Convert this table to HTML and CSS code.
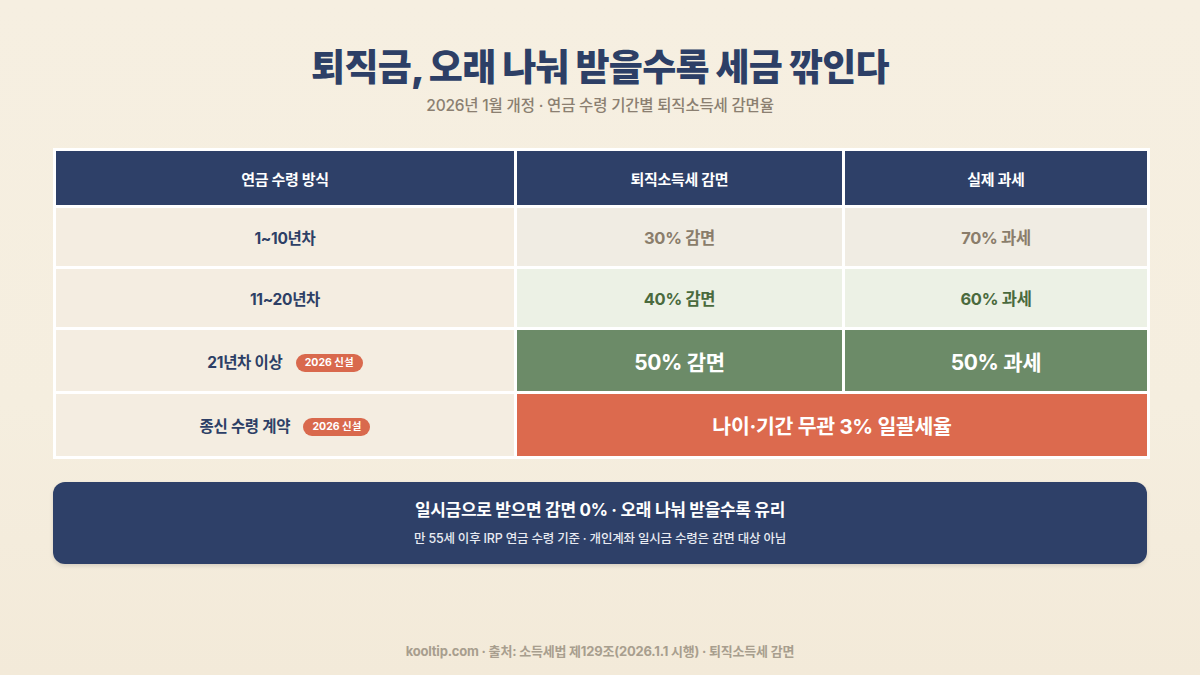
FILE: index.html
```html
<!DOCTYPE html>
<html lang="ko">
<head>
<meta charset="utf-8">
<link rel="stylesheet" href="styles.css">
</head>
<body>
<div class="page">
  <header class="head">
    <h1 class="title">퇴직금, 오래 나눠 받을수록 세금 깎인다</h1>
    <p class="subtitle">2026년 1월 개정 · 연금 수령 기간별 퇴직소득세 감면율</p>
  </header>

  <table class="rates">
    <colgroup>
      <col class="c1"><col class="c2"><col class="c3">
    </colgroup>
    <thead>
      <tr>
        <th>연금 수령 방식</th>
        <th>퇴직소득세 감면</th>
        <th>실제 과세</th>
      </tr>
    </thead>
    <tbody>
      <tr class="r1">
        <td class="label">1~10년차</td>
        <td class="val">30% 감면</td>
        <td class="val">70% 과세</td>
      </tr>
      <tr class="r2">
        <td class="label">11~20년차</td>
        <td class="val">40% 감면</td>
        <td class="val">60% 과세</td>
      </tr>
      <tr class="r3">
        <td class="label">21년차 이상 <span class="badge">2026 신설</span></td>
        <td class="val">50% 감면</td>
        <td class="val">50% 과세</td>
      </tr>
      <tr class="r4">
        <td class="label">종신 수령 계약 <span class="badge">2026 신설</span></td>
        <td class="val" colspan="2">나이·기간 무관 3% 일괄세율</td>
      </tr>
    </tbody>
  </table>

  <section class="note">
    <p class="note-main">일시금으로 받으면 감면 0% · 오래 나눠 받을수록 유리</p>
    <p class="note-sub">만 55세 이후 IRP 연금 수령 기준 · 개인계좌 일시금 수령은 감면 대상 아님</p>
  </section>

  <footer class="foot">kooltip.com · 출처: 소득세법 제129조(2026.1.1 시행) · 퇴직소득세 감면</footer>
</div>
</body>
</html>
```

FILE: styles.css
```css
* { box-sizing: border-box; }
html, body { margin: 0; padding: 0; }
body {
  width: 1200px;
  height: 675px;
  overflow: hidden;
  background: linear-gradient(180deg, #f6efe1 0%, #f5eedf 60%, #f3ead9 100%);
  font-family: Inter, "Noto Sans CJK KR", "Noto Sans", sans-serif;
  color: #2d3f66;
}
.page {
  width: 1094px;
  margin: 0 auto;
  display: flex;
  flex-direction: column;
  height: 675px;
}
.head { text-align: center; padding-top: 43px; }
.title {
  margin: 0;
  font-size: 37px;
  line-height: 50px;
  font-weight: 900;
  letter-spacing: -0.7px;
  color: #2d3f66;
}
.subtitle {
  margin: 2px 0 0;
  font-size: 15.5px;
  line-height: 22px;
  color: #8b7f71;
  font-weight: 500;
  letter-spacing: -0.2px;
}
.rates {
  margin-top: 31px;
  width: 1094px;
  border-collapse: collapse;
  border: 3px solid #ffffff;
  table-layout: fixed;
}
.c1 { width: 461px; }
.c2 { width: 328px; }
.c3 { width: 305px; }
.rates th, .rates td {
  border: 3px solid #ffffff;
  text-align: center;
  padding: 0;
}
.rates th {
  background: #2e4068;
  color: #ffffff;
  font-size: 15px;
  font-weight: 700;
  height: 57px;
  letter-spacing: -0.3px;
}
.rates td { height: 61px; font-weight: 700; letter-spacing: -0.3px; }
.label { font-size: 15.5px; color: #2d3f66; background: #f4ede1; }
.r1 .val { background: #f0ece3; color: #8a7d6b; font-size: 16.5px; }
.r2 .val { background: #ecf1e5; color: #4a6a3d; font-size: 16.5px; }
.r3 td { height: 64px; }
.r3 .val { background: #6c8b68; color: #ffffff; font-size: 21px; }
.r4 td { height: 65px; }
.r4 .val { background: #dc6a4e; color: #ffffff; font-size: 20.5px; }
.badge {
  display: inline-block;
  margin-left: 10px;
  background: #d9694d;
  color: #ffffff;
  font-size: 10.5px;
  font-weight: 700;
  line-height: 18px;
  padding: 0 9px;
  border-radius: 9px;
  vertical-align: 2px;
  letter-spacing: 0;
}
.note {
  margin-top: 23px;
  height: 82px;
  background: #2e4068;
  border-radius: 12px;
  box-shadow: 0 2px 4px rgba(0,0,0,0.12);
  color: #ffffff;
  text-align: center;
  display: flex;
  flex-direction: column;
  justify-content: center;
}
.note-main { margin: 0; font-size: 17px; font-weight: 700; line-height: 24px; letter-spacing: -0.3px; }
.note-sub { margin: 8px 0 0; font-size: 12.5px; line-height: 18px; font-weight: 500; color: #e8ebf2; letter-spacing: -0.2px; }
.foot {
  margin-top: auto;
  padding-bottom: 15px;
  text-align: center;
  font-size: 13px;
  font-weight: 700;
  color: #a89e8e;
  letter-spacing: -0.2px;
}
```
